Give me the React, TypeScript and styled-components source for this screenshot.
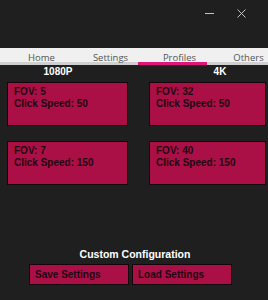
import styled, { createGlobalStyle } from 'styled-components';

const GlobalStyle = createGlobalStyle`
  html, body {
    margin: 0;
    padding: 0;
    background: #1f1f1f;
  }
  body {
    width: 268px;
    height: 300px;
    overflow: hidden;
    font-family: 'Liberation Sans', Arial, sans-serif;
  }
`;

interface IProfile {
  fov: number;
  clickSpeed: number;
}

const TABS = ['Home', 'Settings', 'Profiles', 'Others'];
const ACTIVE_TAB = 'Profiles';

// rows of [1080P, 4K]
const PROFILES: IProfile[][] = [
  [
    { fov: 5, clickSpeed: 50 },
    { fov: 32, clickSpeed: 50 },
  ],
  [
    { fov: 7, clickSpeed: 150 },
    { fov: 40, clickSpeed: 150 },
  ],
];

const Window = styled.div`
  width: 268px;
  height: 300px;
  display: flex;
  flex-direction: column;
  background: #1f1f1f;
  overflow: hidden;
`;

const TitleBar = styled.div`
  height: 48px;
  flex-shrink: 0;
  display: flex;
  justify-content: flex-end;
  align-items: flex-start;
  padding-right: 11px;
  box-sizing: border-box;
`;

const WindowButton = styled.button`
  width: 32px;
  height: 27px;
  border: 0;
  padding: 0;
  background: transparent;
  display: flex;
  align-items: center;
  justify-content: center;
  color: #c4c4c4;
`;

const TabBar = styled.div`
  height: 17px;
  flex-shrink: 0;
  display: flex;
  background: #f0f0f0;
  border-bottom: 3px solid #cfcfcf;
  box-sizing: content-box;
  height: 14px;
`;

const Tab = styled.div<{ $active?: boolean }>`
  flex: 0 0 69px;
  height: 17px;
  box-sizing: border-box;
  padding: 6px 0 0 14px;
  border-bottom: 3px solid ${(p) => (p.$active ? '#e0157c' : 'transparent')};
  font-family: 'Open Sans', 'Noto Sans', sans-serif;
  font-size: 9.5px;
  line-height: 8px;
  color: #555555;
  text-align: center;
  white-space: nowrap;
`;

const HeadingRow = styled.div`
  margin-top: 1px;
  display: grid;
  grid-template-columns: 116px 1fr 96px;
`;

const Heading = styled.div<{ $col: number }>`
  grid-column: ${(p) => p.$col};
  font-size: 10px;
  font-weight: bold;
  line-height: 12px;
  color: #ffffff;
  text-align: center;
`;

const CardGrid = styled.div`
  margin-top: 4px;
  padding-left: 7px;
  display: grid;
  grid-template-columns: 121px 117px;
  column-gap: 21px;
  row-gap: 15px;
`;

const Card = styled.div`
  height: 44px;
  box-sizing: border-box;
  border: 1px solid #16050b;
  background: #aa1046;
  padding: 3px 6px;
  font-size: 10px;
  font-weight: bold;
  line-height: 12px;
  color: #1e0612;
`;

const Footer = styled.div`
  margin-top: auto;
  padding-bottom: 15px;
  display: flex;
  flex-direction: column;
  gap: 4px;
`;

const FooterTitle = styled.div`
  font-size: 10.5px;
  font-weight: bold;
  line-height: 12px;
  color: #ffffff;
  text-align: center;
  padding-left: 2px;
`;

const ButtonRow = styled.div`
  display: flex;
  gap: 3px;
  padding-left: 29px;
`;

const ActionButton = styled.button`
  width: 100px;
  height: 21px;
  box-sizing: border-box;
  border: 1px solid #16050b;
  background: #aa1046;
  padding: 0 5px;
  text-align: left;
  font-family: 'Liberation Sans', Arial, sans-serif;
  font-size: 10px;
  font-weight: bold;
  line-height: 19px;
  color: #1e0612;
`;

const App = () => {
  return (
    <Window>
      <GlobalStyle />
      <TitleBar>
        <WindowButton aria-label="Minimize">
          <svg width="9" height="1" viewBox="0 0 9 1">
            <rect width="9" height="1" fill="currentColor" />
          </svg>
        </WindowButton>
        <WindowButton aria-label="Close">
          <svg width="9" height="9" viewBox="0 0 9 9">
            <path d="M0.5 0.5 L8.5 8.5 M8.5 0.5 L0.5 8.5" stroke="currentColor" strokeWidth="1" />
          </svg>
        </WindowButton>
      </TitleBar>

      <TabBar>
        {TABS.map((tab) => (
          <Tab key={tab} $active={tab === ACTIVE_TAB}>
            {tab}
          </Tab>
        ))}
      </TabBar>

      <HeadingRow>
        <Heading $col={1}>1080P</Heading>
        <Heading $col={3}>4K</Heading>
      </HeadingRow>

      <CardGrid>
        {PROFILES.flat().map((p, i) => (
          <Card key={i}>
            FOV: {p.fov}
            <br />
            Click Speed: {p.clickSpeed}
          </Card>
        ))}
      </CardGrid>

      <Footer>
        <FooterTitle>Custom Configuration</FooterTitle>
        <ButtonRow>
          <ActionButton>Save Settings</ActionButton>
          <ActionButton>Load Settings</ActionButton>
        </ButtonRow>
      </Footer>
    </Window>
  );
};

export default App;
